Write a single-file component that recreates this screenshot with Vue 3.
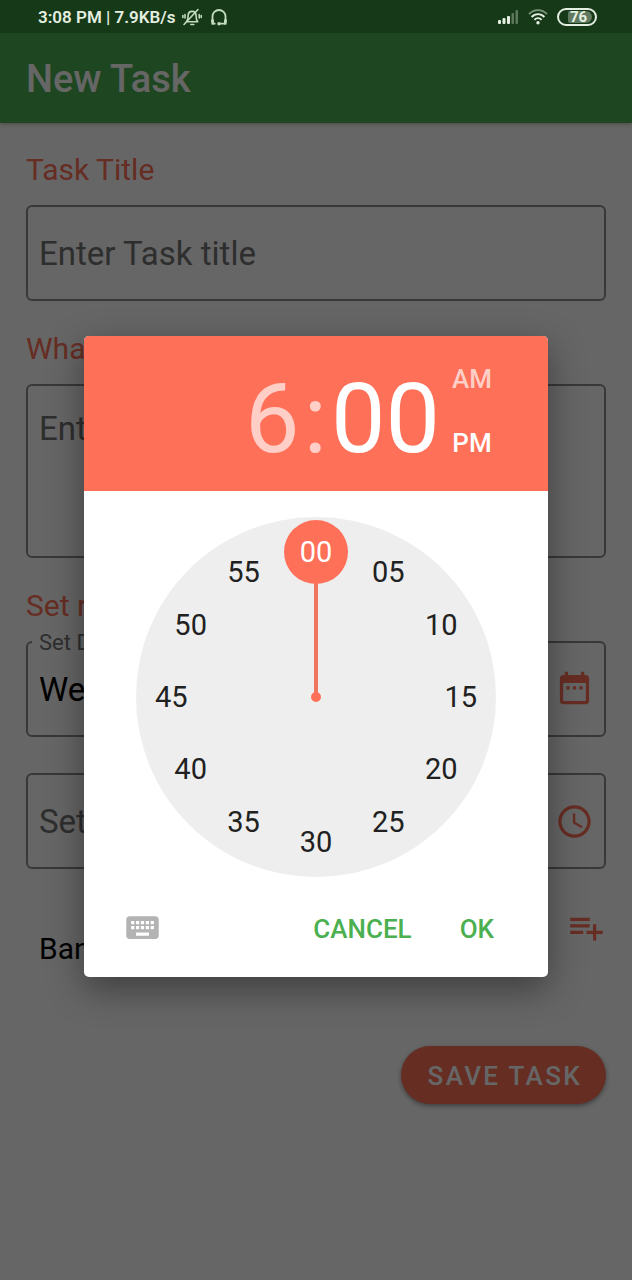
<script setup>
import { ref, computed } from 'vue'

const minutes = Array.from({ length: 12 }, (_, i) => i * 5)
const minute = ref(0)
const period = ref('PM')
const title = ref('')
const description = ref('')
const date = ref('Wed, 15 Jul 2020')
const time = ref('')

const pad = (n) => String(n).padStart(2, '0')

const positions = computed(() =>
  minutes.map((m) => {
    const a = (m / 60) * Math.PI * 2
    return {
      value: m,
      style: {
        left: 50 + Math.sin(a) * 40.2 + '%',
        top: 50 - Math.cos(a) * 40.2 + '%',
      },
    }
  }),
)
const handStyle = computed(() => ({ rotate: minute.value * 6 + 'deg' }))
</script>

<template>
  <div class="screen">
    <header class="status">
      <div class="status-left">
        <span>3:08 PM | 7.9KB/s</span>
        <svg class="bell" viewBox="0 0 20 18" aria-hidden="true">
          <g fill="none" stroke="currentColor" stroke-width="1.6" stroke-linecap="round" stroke-linejoin="round">
            <path d="M4.500 13.800c1.300-1.400 1.600-2.800 1.600-5.800 0-2.600 1.500-4.600 4-4.600s4 2 4 4.600c0 3 .3 4.400 1.600 5.800z" />
            <path d="M2 16.500 16 1.500M3 6.500v3.500M.9 7.500v2M17.200 6.500v3.500M19.200 7.500v2M8.800 16.500h3" />
          </g>
        </svg>
        <svg class="headset" viewBox="0 0 18 18" aria-hidden="true">
          <path d="M2.500 14.500V8.500a6.500 6.500 0 0 1 13 0v6M2 15.700h3.500M16 15.700H9" fill="none" stroke="currentColor" stroke-width="1.800" />
          <path d="M1 11.500h3v5H1.500zM14 11.500h3l-.5 5H14z" fill="currentColor" />
          <circle cx="9" cy="15.700" r="1.700" fill="currentColor" />
        </svg>
      </div>
      <div class="status-right">
        <svg class="signal" viewBox="0 0 21 14" fill="currentColor" aria-hidden="true">
          <rect x="0" y="10" width="3" height="4" rx="1" />
          <rect x="4.500" y="8" width="3" height="6" rx="1" />
          <rect x="9" y="6" width="3" height="8" rx="1" />
          <rect x="13.500" y="3" width="2.500" height="11" rx="1" opacity=".35" />
          <rect x="17.500" y="0" width="2.500" height="14" rx="1" opacity=".35" />
        </svg>
        <svg class="wifi" viewBox="0 0 20 16" aria-hidden="true">
          <g fill="none" stroke="currentColor" stroke-width="1.900">
            <path d="M1 5.200C6-.2 14-.2 19 5.200" opacity=".5" />
            <path d="M3.600 8c3.600-3.900 9.200-3.900 12.800 0M6.400 10.800c2.100-2.200 5.100-2.200 7.200 0" />
          </g>
          <circle cx="10" cy="13.700" r="1.700" fill="currentColor" />
        </svg>
        <span class="battery"><span>76</span></span>
      </div>
    </header>

    <div class="body">
      <div class="appbar"><h1>New Task</h1></div>

      <form class="form" @submit.prevent>
        <label class="heading" for="title">Task Title</label>
        <input id="title" v-model="title" class="field" type="text" placeholder="Enter Task title" />

        <label class="heading" for="description">What is to be done?</label>
        <textarea id="description" v-model="description" class="field area" placeholder="Enter description"></textarea>

        <h2 class="heading">Set repeat</h2>
        <fieldset class="outlined labelled">
          <legend><label for="date">Set Date</label></legend>
          <input id="date" v-model="date" type="text" />
          <button type="button" class="icon" aria-label="Pick date">
            <svg viewBox="0 0 24 24" fill="currentColor">
              <path d="M19 3h-1V1h-2v2H8V1H6v2H5c-1.110 0-2 .9-2 2v14c0 1.100.89 2 2 2h14c1.100 0 2-.9 2-2V5c0-1.100-.9-2-2-2zm0 16H5V8h14v11zM7 10h2v2H7zM11 10h2v2h-2zM15 10h2v2h-2z" />
            </svg>
          </button>
        </fieldset>

        <div class="outlined">
          <input v-model="time" type="text" placeholder="Set Time" aria-label="Set Time" />
          <button type="button" class="icon" aria-label="Pick time">
            <svg viewBox="0 0 24 24" fill="currentColor">
              <path d="M11.990 2C6.470 2 2 6.480 2 12s4.470 10 9.990 10C17.520 22 22 17.520 22 12S17.520 2 11.990 2zM12 20c-4.420 0-8-3.580-8-8s3.580-8 8-8 8 3.580 8 8-3.580 8-8 8zm.5-13H11v6l5.250 3.150.75-1.230-4.500-2.670z" />
            </svg>
          </button>
        </div>

        <div class="list-row">
          <span>Bank</span>
          <button type="button" class="icon" aria-label="Add list">
            <svg viewBox="0 0 24 24" fill="currentColor">
              <path d="M14 10H2v2h12v-2zm0-4H2v2h12V6zm4 8v-4h-2v4h-4v2h4v4h2v-4h4v-2h-4zM2 16h8v-2H2v2z" />
            </svg>
          </button>
        </div>

        <button type="submit" class="save">SAVE TASK</button>
      </form>
    </div>

    <div class="scrim"></div>

    <div class="overlay">
      <section class="dialog" role="dialog" aria-label="Choose time">
        <div class="time-header">
          <div class="digits">
            <button type="button" class="dim">6</button><span class="dim">:</span><button type="button">{{ pad(minute) }}</button>
          </div>
          <div class="periods">
            <button
              v-for="p in ['AM', 'PM']"
              :key="p"
              type="button"
              :class="{ dim: period !== p }"
              @click="period = p"
            >{{ p }}</button>
          </div>
        </div>

        <div class="clock">
          <div class="hand" :style="handStyle"></div>
          <div class="pivot"></div>
          <button
            v-for="p in positions"
            :key="p.value"
            type="button"
            class="tick"
            :class="{ selected: p.value === minute }"
            :style="p.style"
            @click="minute = p.value"
          >{{ pad(p.value) }}</button>
        </div>

        <div class="actions">
          <button type="button" class="keyboard" aria-label="Switch to text input">
            <svg viewBox="0 0 24 24" fill="currentColor">
              <path d="M20 5H4c-1.100 0-1.990.9-1.990 2L2 17c0 1.100.9 2 2 2h16c1.100 0 2-.9 2-2V7c0-1.100-.9-2-2-2zm-9 3h2v2h-2V8zm0 3h2v2h-2v-2zM8 8h2v2H8V8zm0 3h2v2H8v-2zm-1 2H5v-2h2v2zm0-3H5V8h2v2zm9 7H8v-2h8v2zm0-4h-2v-2h2v2zm0-3h-2V8h2v2zm3 3h-2v-2h2v2zm0-3h-2V8h2v2z" />
            </svg>
          </button>
          <button type="button" class="text-button">CANCEL</button>
          <button type="button" class="text-button">OK</button>
        </div>
      </section>
    </div>
  </div>
</template>

<style>
html,
body,
#app {
  height: 100%;
}
</style>

<style scoped>
.screen {
  --coral: #ff7058;
  position: relative;
  min-height: 100%;
  display: flex;
  flex-direction: column;
  box-sizing: border-box;
  background: #fff;
  color: #000;
  font-family: Roboto, sans-serif;
}
.screen *,
.screen *::before {
  box-sizing: border-box;
}
button {
  margin: 0;
  padding: 0;
  border: 0;
  background: none;
  color: inherit;
  font: inherit;
  cursor: pointer;
}
svg {
  display: block;
}
.status {
  position: relative;
  z-index: 2;
  height: 33px;
  padding: 0 35px 0 38px;
  display: flex;
  align-items: center;
  justify-content: space-between;
  background: #163918;
  color: #e4efe1;
  font-size: 17px;
  font-weight: 600;
}
.status-left,
.status-right {
  display: flex;
  align-items: center;
}
.bell {
  width: 20px;
  height: 18px;
  margin-left: 6px;
}
.headset {
  width: 18px;
  height: 18px;
  margin-left: 8px;
}
.bell,
.headset {
  color: #c2dcbd;
}
.signal {
  width: 21px;
  height: 14px;
}
.wifi {
  width: 20px;
  height: 16px;
  margin-left: 9px;
}
.battery {
  width: 40px;
  height: 18px;
  margin-left: 9px;
  padding: 1px 3px 1px 9px;
  border: 2px solid currentColor;
  border-radius: 9px;
  display: flex;
}
.battery span {
  flex: 1;
  border-radius: 2px 6px 6px 2px;
  background: #60795f;
  padding-left: 2px;
  font-size: 15px;
  font-weight: 700;
  line-height: 12px;
}
.appbar {
  height: 90px;
  padding: 2px 26px 0;
  display: flex;
  align-items: center;
  background: #4caf50;
  color: #fff;
  box-shadow: 0 1px 4px rgba(0, 0, 0, 0.3);
}
h1 {
  margin: 0;
  font-size: 38px;
  font-weight: 500;
}
.form {
  padding: 27px 26px 0;
  display: flex;
  flex-direction: column;
}
.heading {
  margin: 0 0 15px;
  color: var(--coral);
  font-size: 30px;
  font-weight: 400;
  line-height: 40px;
}
.field,
.outlined {
  width: 100%;
  height: 96px;
  margin: 0 0 28px;
  padding: 0 11px;
  border: 2px solid #8c8c8c;
  border-radius: 6px;
  background: none;
  color: #000;
  font-family: inherit;
  font-size: 33px;
}
.area {
  height: 174px;
  padding: 23px 11px;
  line-height: 40px;
  resize: none;
}
.outlined {
  display: flex;
  align-items: center;
  margin-bottom: 36px;
  padding-right: 10px;
}
.outlined input {
  flex: 1;
  min-width: 0;
  padding: 0;
  border: 0;
  background: none;
  color: #000;
  font: inherit;
}
::placeholder {
  color: #737373;
  opacity: 1;
}
.labelled {
  height: 109px;
  margin-top: -13px;
  padding-top: 14px;
  padding-left: 4px;
}
.labelled input {
  padding-left: 7px;
}
legend {
  padding: 2px 7px 0;
  color: #737373;
  font-size: 22px;
  line-height: 26px;
}
.icon {
  flex: none;
  color: var(--coral);
}
.icon svg {
  width: 39px;
  height: 39px;
}
.list-row {
  display: flex;
  align-items: flex-start;
  justify-content: space-between;
  padding: 3px 0 0 13px;
  font-size: 30px;
}
.list-row span {
  padding-top: 21px;
  line-height: 40px;
}
.save {
  align-self: flex-end;
  height: 58px;
  margin-top: 77px;
  padding: 2px 24px 0 27px;
  border-radius: 29px;
  background: var(--coral);
  color: #fff;
  font-size: 26px;
  font-weight: 500;
  letter-spacing: 0.09em;
  box-shadow: 0 2px 5px rgba(0, 0, 0, 0.4);
}
.scrim {
  position: absolute;
  inset: 0;
  background: rgba(0, 0, 0, 0.6);
}
.overlay {
  position: absolute;
  inset: 33px 0 0;
  padding: 0 84px;
  display: flex;
  align-items: center;
  justify-content: center;
}
.dialog {
  flex: 1;
  max-width: 464px;
  border-radius: 5px;
  overflow: hidden;
  background: #fff;
  box-shadow: 0 12px 36px rgba(0, 0, 0, 0.4);
}
.time-header {
  height: 155px;
  padding-right: 56px;
  display: flex;
  align-items: center;
  justify-content: flex-end;
  gap: 12px;
  background: var(--coral);
  color: #fff;
}
.digits {
  display: flex;
  padding-top: 11px;
  font-size: 97px;
  line-height: 114px;
}
.digits span {
  padding: 0 4px;
}
.dim {
  color: #ffcfc7;
}
.periods {
  display: flex;
  flex-direction: column;
  gap: 34px;
  padding-bottom: 5px;
  font-size: 26px;
  font-weight: 500;
  line-height: 30px;
}
.clock {
  position: relative;
  width: 360px;
  max-width: 100%;
  aspect-ratio: 1;
  margin: 26px auto 0;
  border-radius: 50%;
  background: #eee;
}
.hand {
  position: absolute;
  left: 50%;
  top: 10%;
  width: 4px;
  height: 40%;
  margin-left: -2px;
  transform-origin: 50% 100%;
  background: #f07560;
}
.pivot {
  position: absolute;
  left: 50%;
  top: 50%;
  width: 10px;
  height: 10px;
  margin: -5px 0 0 -5px;
  border-radius: 50%;
  background: var(--coral);
}
.tick {
  position: absolute;
  width: 64px;
  height: 64px;
  margin: -32px 0 0 -32px;
  border-radius: 50%;
  color: #212121;
  font-size: 29px;
}
.selected {
  background: var(--coral);
  color: #fff;
}
.actions {
  height: 100px;
  padding: 0 54px 0 39px;
  display: flex;
  align-items: center;
  gap: 48px;
  color: #4caf50;
  font-size: 26px;
  font-weight: 500;
}
.text-button {
  padding-top: 3px;
}
.keyboard {
  margin-right: auto;
  color: #b3b3b3;
}
.keyboard svg {
  width: 39px;
  height: 39px;
}
</style>
